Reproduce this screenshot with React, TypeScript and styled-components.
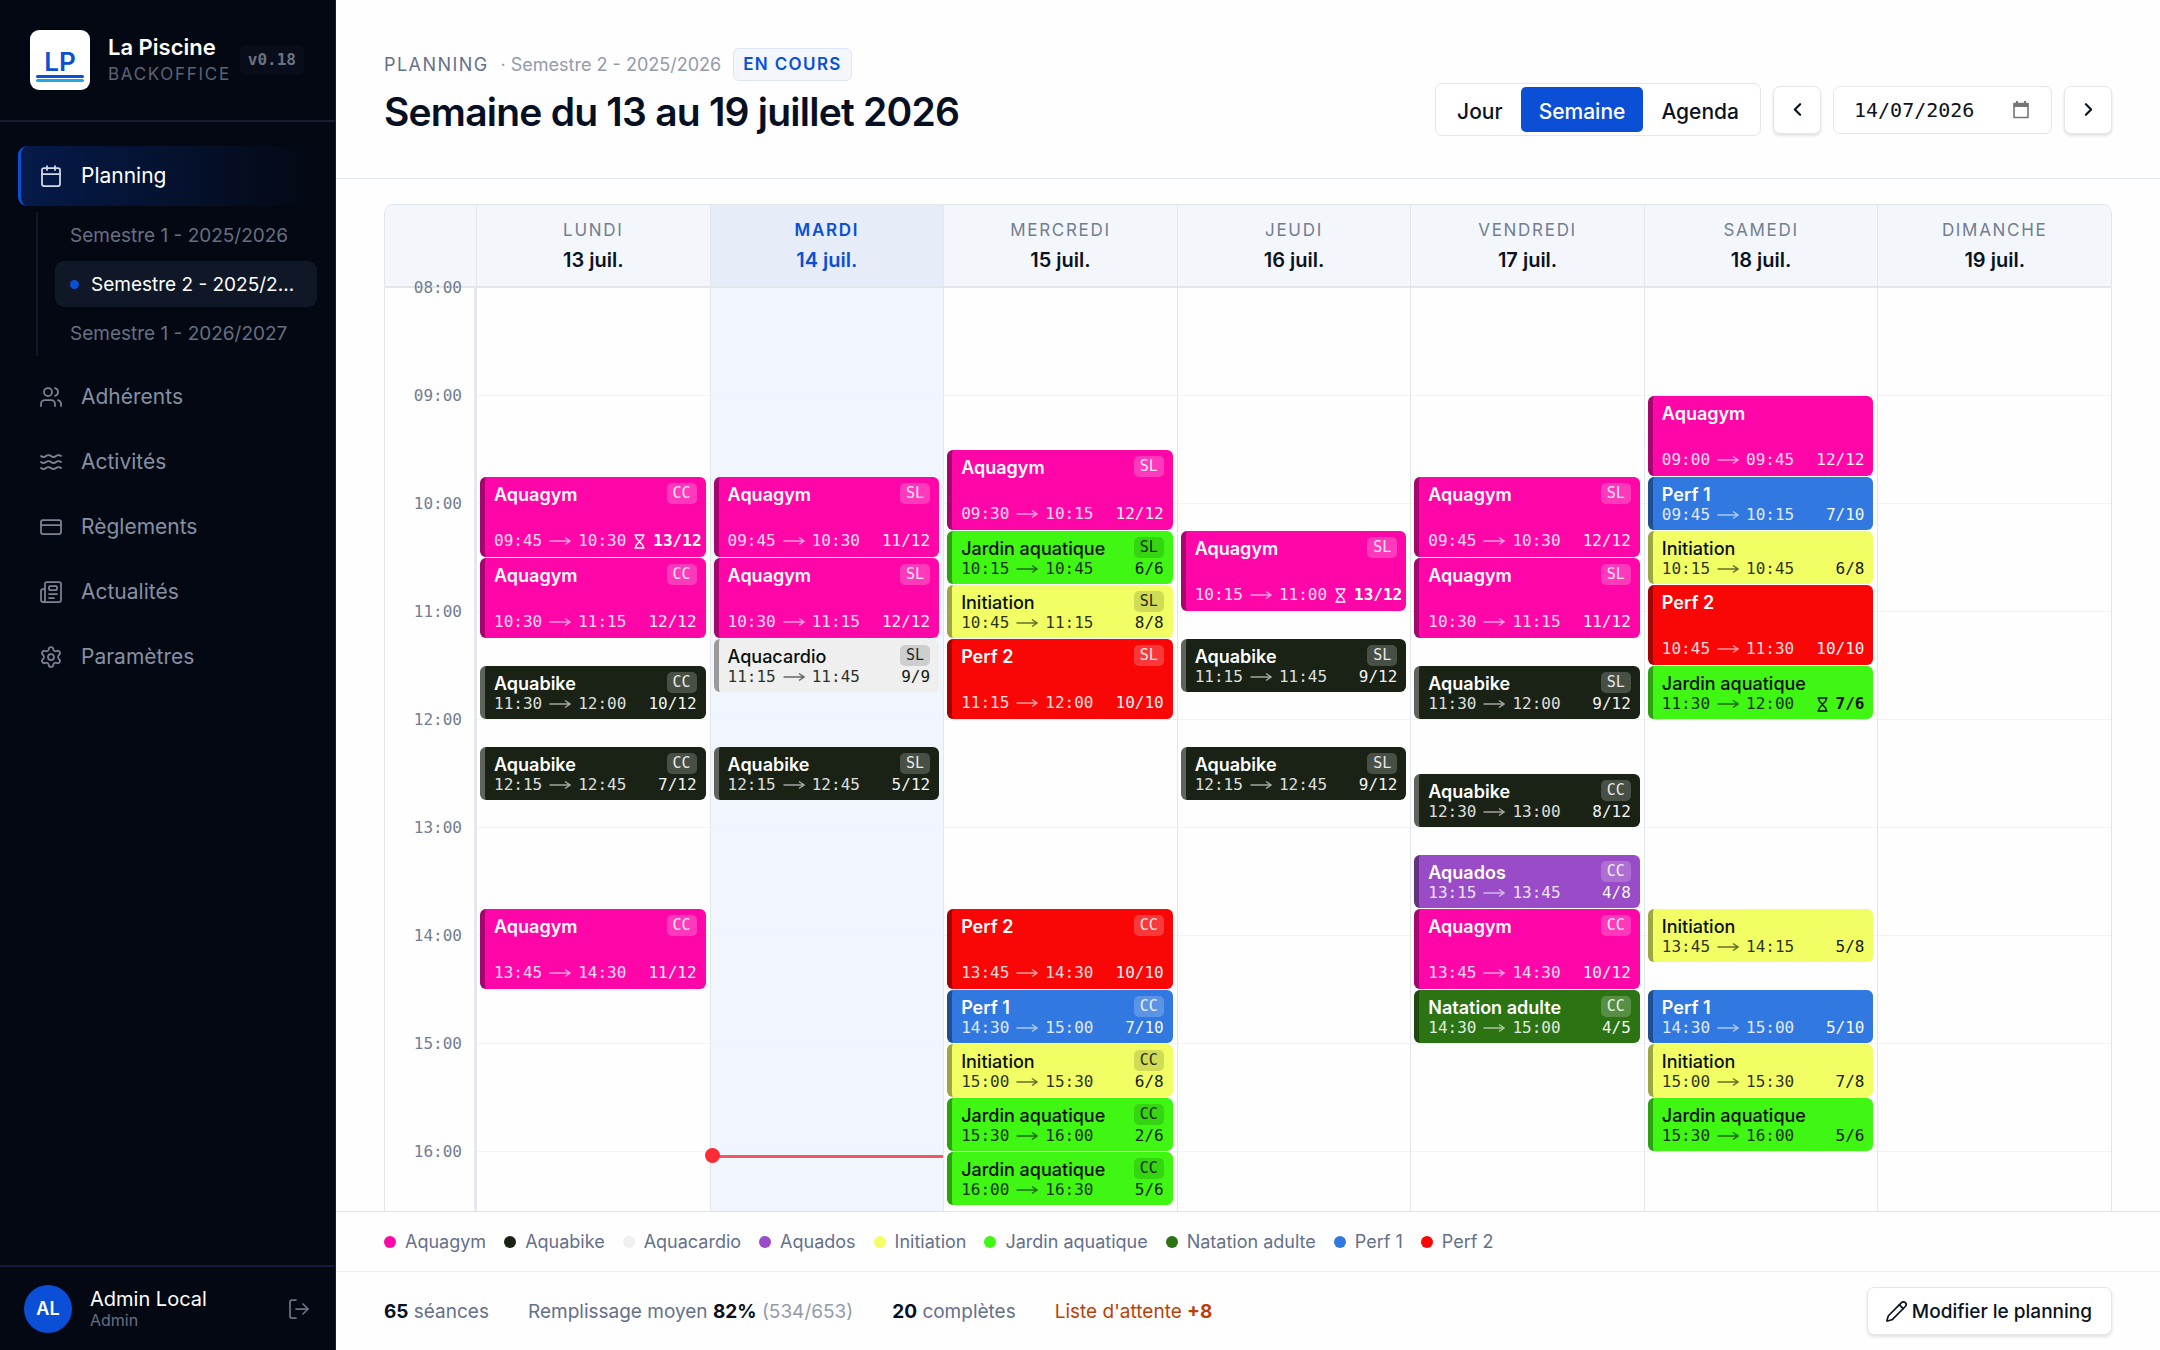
import React from "react";
import styled, { createGlobalStyle, css } from "styled-components";
import {
  Calendar, Users, Waves, CreditCard, Newspaper, Settings, LogOut,
  ChevronLeft, ChevronRight, Pencil,
} from "lucide-react";

const sans = `Inter, "Liberation Sans", sans-serif`;
const mono = `"DejaVu Sans Mono", "Liberation Mono", monospace`;
const HOUR = 108;
const FIRST_HOUR = 8;
const LAST_HOUR = 17;

const Global = createGlobalStyle`
  *, *::before, *::after { box-sizing: border-box; }
  body { margin: 0; font-family: ${sans}; color: #0b1220; background: #fefefe; }
  button, input { font: inherit; color: inherit; margin: 0; }
  h1, h2, p, ul { margin: 0; padding: 0; }
  ul { list-style: none; }
  a { color: inherit; text-decoration: none; }
`;

const Shell = styled.div`
  display: grid;
  grid-template-columns: 336px minmax(0, 1fr);
  height: 100vh;
  overflow: hidden;
`;

/* ---------- sidebar ---------- */
const Sidebar = styled.aside`
  display: flex;
  flex-direction: column;
  background: #040813;
  border-right: 1px solid #1a1b3a;
  color: #fff;
`;
const Brand = styled.div`
  display: flex;
  align-items: center;
  gap: 18px;
  padding: 30px;
  border-bottom: 2px solid #171a35;
`;
const BrandName = styled.div`
  font-size: 22px;
  line-height: 28px;
  font-weight: 600;
`;
const BrandSub = styled.div`
  font-size: 17px;
  line-height: 26px;
  letter-spacing: 0.1em;
  color: #5b6474;
`;
const BrandText = styled.div`
  flex: none;
`;
const Version = styled.span`
  margin-left: -9px;
  padding: 0 8px;
  border-radius: 6px;
  background: #080d19;
  font: 600 16px/30px ${mono};
  color: #6a7282;
`;
const Nav = styled.nav`
  flex: 1;
  padding: 24px 18px;
`;
const NavList = styled.ul`
  display: flex;
  flex-direction: column;
  gap: 5px;
`;
const NavLink = styled.a<{ $active?: boolean }>`
  display: flex;
  align-items: center;
  gap: 18px;
  height: 60px;
  padding-left: 18px;
  border-left: 3px solid transparent;
  border-radius: 9px;
  font-size: 21px;
  line-height: 30px;
  font-weight: 400;
  color: #8490a3;
  svg { color: #7b8495; }
  ${(p) => p.$active && css`
    color: #fff;
    border-left-color: #0b4fd6;
    background: linear-gradient(90deg, #051a4a, #040813);
    svg { color: #d3dbe8; }
  `}
`;
const SubList = styled.ul`
  display: flex;
  flex-direction: column;
  gap: 3px;
  margin: 6px 0 6px 18px;
  padding-left: 17px;
  border-left: 2px solid #14172c;
`;
const SubLink = styled.a<{ $active?: boolean }>`
  display: flex;
  align-items: center;
  gap: 12px;
  height: 46px;
  padding: 0 15px;
  border-radius: 9px;
  font-size: 19px;
  color: #667082;
  span { overflow: hidden; text-overflow: ellipsis; white-space: nowrap; }
  ${(p) => p.$active && css`
    color: #fff;
    background: #101828;
    &::before {
      content: "";
      flex: none;
      width: 9px;
      height: 9px;
      border-radius: 50%;
      background: #0b4fd6;
    }
  `}
`;
const Account = styled.div`
  display: flex;
  align-items: center;
  gap: 18px;
  height: 85px;
  padding: 0 24px;
  border-top: 2px solid #171a35;
`;
const Avatar = styled.span`
  width: 48px;
  height: 48px;
  border-radius: 50%;
  background: #0b4fd6;
  font-size: 18px;
  line-height: 48px;
  font-weight: 600;
  text-align: center;
`;
const AccountText = styled.div`
  flex: 1;
`;
const AccountName = styled.div`
  font-size: 20px;
  line-height: 22px;
  font-weight: 400;
`;
const AccountRole = styled.div`
  font-size: 16px;
  line-height: 20px;
  color: #667082;
`;
const GhostButton = styled.button`
  display: flex;
  padding: 0;
  border: 0;
  background: none;
  color: #6a7282;
`;

/* ---------- main header ---------- */
const Main = styled.main`
  display: flex;
  flex-direction: column;
  min-width: 0;
  min-height: 0;
`;
const Header = styled.header`
  flex: none;
  display: flex;
  justify-content: space-between;
  align-items: flex-end;
  padding: 48px 48px 42px;
  border-bottom: 1px solid #e2e7ec;
`;
const Eyebrow = styled.p`
  display: flex;
  align-items: center;
  gap: 12px;
  height: 33px;
  font-size: 18px;
  color: #939bab;
`;
const EyebrowStrong = styled.span`
  letter-spacing: 0.08em;
  color: #64708a;
`;
const Status = styled.span`
  padding: 0 9px;
  border: 1px solid #dbe5f3;
  border-radius: 6px;
  background: #f3f7fb;
  font-size: 17px;
  line-height: 31px;
  font-weight: 600;
  letter-spacing: 0.08em;
  color: #0b4fd6;
`;
const Title = styled.h1`
  margin-top: 6px;
  font-size: 39px;
  line-height: 49px;
  font-weight: 600;
  letter-spacing: -0.02em;
  color: #071022;
`;
const Controls = styled.div`
  display: flex;
  align-items: center;
  gap: 12px;
`;
const Segmented = styled.div`
  display: flex;
  padding: 3px;
  border: 1px solid #e2e7ec;
  border-radius: 7px;
  background: #fff;
`;
const Segment = styled.button<{ $active?: boolean }>`
  height: 45px;
  padding: 3px 18px 0;
  border: 0;
  border-radius: 5px;
  background: ${(p) => (p.$active ? "#0b4fd6" : "transparent")};
  color: ${(p) => (p.$active ? "#fff" : "#0b1220")};
  font-size: 21px;
  font-weight: 500;
`;
const raised = css`
  border: 1px solid #e2e7ec;
  border-radius: 7px;
  background: #fff;
  box-shadow: 0 2px 3px rgba(15, 23, 42, 0.12);
`;
const Step = styled.button`
  ${raised}
  display: flex;
  align-items: center;
  justify-content: center;
  width: 48px;
  height: 48px;
  padding: 0;
`;
const DateField = styled.label`
  display: flex;
  align-items: center;
  width: 219px;
  height: 48px;
  padding: 0 20px;
  border: 1px solid #e2e7ec;
  border-radius: 7px;
  background: #fff;
  color: #767676;
`;
const DateInput = styled.input`
  flex: 1;
  min-width: 0;
  padding: 0;
  border: 0;
  outline: 0;
  background: none;
  font: 400 20px/24px ${mono};
  color: #0b1220;
`;

/* ---------- calendar ---------- */
const columns = css`
  display: grid;
  grid-template-columns: 91px repeat(7, minmax(0, 1fr));
`;
const Viewport = styled.div`
  flex: 1;
  min-height: 0;
  padding: 25px 48px 0;
  overflow: hidden;
`;
const Board = styled.section`
  border: 1px solid #e2e7ec;
  border-radius: 9px;
  overflow: hidden;
`;
const DayHeads = styled.div`
  ${columns}
  height: 83px;
  background: #f3f7fb;
  border-bottom: 2px solid #e2e7ec;
`;
const DayHead = styled.div<{ $today?: boolean }>`
  padding-top: 11px;
  border-left: 1px solid #e2e7ec;
  text-align: center;
  background: ${(p) => (p.$today ? "#e6ecf8" : "transparent")};
  color: ${(p) => (p.$today ? "#0b4fd6" : "#0b1220")};
`;
const DayName = styled.div<{ $today?: boolean }>`
  font-size: 17px;
  line-height: 28px;
  letter-spacing: 0.1em;
  font-weight: ${(p) => (p.$today ? 600 : 400)};
  color: ${(p) => (p.$today ? "#0b4fd6" : "#737d92")};
`;
const DayDate = styled.div`
  font-size: 20px;
  line-height: 32px;
  font-weight: 600;
`;
const Grid = styled.div`
  ${columns}
`;
const Hours = styled.div`
  border-right: 2px solid #e6e9f0;
`;
const HourCell = styled.div`
  height: ${HOUR}px;
  padding-right: 12px;
  text-align: right;
`;
const HourText = styled.span`
  position: relative;
  top: -12px;
  display: block;
  font: 400 16px/24px ${mono};
  color: #737d92;
`;
const Day = styled.div<{ $today?: boolean }>`
  position: relative;
  border-left: 1px solid #e2e7ec;
  background:
    repeating-linear-gradient(to bottom, transparent 0 ${HOUR - 1}px, #f0f3f7 ${HOUR - 1}px ${HOUR}px)
    ${(p) => (p.$today ? "#f1f5fe" : "#fefefe")};
`;
const Session = styled.button<{ $bg: string; $edge: string; $dark: boolean; $start: number; $length: number }>`
  position: absolute;
  left: 3px;
  right: 4px;
  top: ${(p) => (p.$start * HOUR) / 60}px;
  height: ${(p) => (p.$length * HOUR) / 60 - 1}px;
  display: flex;
  flex-direction: column;
  justify-content: space-between;
  padding: 6px 9px;
  border: 0;
  border-left: 5px solid ${(p) => p.$edge};
  border-radius: 6px;
  background: ${(p) => p.$bg};
  color: ${(p) => (p.$dark ? "#0a0f0a" : "#fff")};
  text-align: left;
`;
const SessionTop = styled.span`
  flex: none;
  display: flex;
  justify-content: space-between;
  align-items: flex-start;
  width: 100%;
  height: 22px;
  font-size: 18px;
  line-height: 24px;
`;
const SessionName = styled.span<{ $dark: boolean }>`
  font-weight: ${(p) => (p.$dark ? 500 : 600)};
  white-space: nowrap;
`;
const Teacher = styled.span<{ $dark: boolean }>`
  padding: 0 6px;
  border-radius: 5px;
  background: ${(p) => (p.$dark ? "rgba(0,0,0,.15)" : "rgba(255,255,255,.23)")};
  font: 400 15px/21px ${mono};
  opacity: 0.9;
`;
const SessionBottom = styled.span`
  flex: none;
  display: flex;
  justify-content: space-between;
  width: 100%;
  gap: 8px;
  font: 400 16px/20px ${mono};
  white-space: nowrap;
`;
const Times = styled.span`
  display: flex;
  opacity: 0.85;
`;
const Arrow = styled.span`
  display: flex;
  align-items: center;
  justify-content: center;
  width: 36px;
  opacity: 0.7;
`;
const Count = styled.span<{ $over: boolean }>`
  display: flex;
  align-items: center;
  gap: 8px;
  opacity: ${(p) => (p.$over ? 1 : 0.95)};
  font-weight: ${(p) => (p.$over ? 700 : 400)};
`;
const NowLine = styled.div`
  position: absolute;
  left: 0;
  right: 0;
  top: ${8 * HOUR + 3}px;
  height: 3px;
  background: #ee5a60;
  &::before {
    content: "";
    position: absolute;
    left: -6px;
    top: -7px;
    width: 15px;
    height: 15px;
    border-radius: 50%;
    background: #fb2c36;
  }
`;

/* ---------- footer ---------- */
const Legend = styled.ul`
  flex: none;
  display: flex;
  align-items: center;
  gap: 18px;
  height: 60px;
  padding: 0 48px;
  border-top: 1px solid #dfe4e9;
  font-size: 18px;
  color: #64708a;
`;
const LegendItem = styled.li<{ $color: string }>`
  display: flex;
  align-items: center;
  gap: 9px;
  &::before {
    content: "";
    width: 12px;
    height: 12px;
    border-radius: 50%;
    background: ${(p) => p.$color};
  }
`;
const Summary = styled.footer`
  flex: none;
  display: flex;
  align-items: center;
  gap: 39px;
  height: 79px;
  padding: 0 48px;
  border-top: 1px solid #eef1f4;
  font-size: 19px;
  color: #64708a;
  strong { font-weight: 700; color: #071022; }
  small { font-size: inherit; color: #939bab; }
`;
const Waiting = styled.span`
  color: #bb3f06;
  strong { color: inherit; }
`;
const EditButton = styled.button`
  ${raised}
  display: flex;
  align-items: center;
  gap: 4px;
  height: 48px;
  margin-left: auto;
  padding: 0 19px 0 17px;
  font-size: 19px;
  font-weight: 500;
  color: #0b1220;
`;

type Activity = { bg: string; edge: string; dark: boolean };
const activities: Record<string, Activity> = {
  Aquagym: { bg: "#ff06a9", edge: "#a6046e", dark: false },
  Aquabike: { bg: "#192215", edge: "#5e645b", dark: false },
  Aquacardio: { bg: "#efefef", edge: "#9b9b9b", dark: true },
  Aquados: { bg: "#994bc8", edge: "#633182", dark: false },
  Initiation: { bg: "#f2ff64", edge: "#9da641", dark: true },
  "Jardin aquatique": { bg: "#40f714", edge: "#2aa10d", dark: true },
  "Natation adulte": { bg: "#2c7314", edge: "#1d4b0d", dark: false },
  "Perf 1": { bg: "#3178e0", edge: "#204e92", dark: false },
  "Perf 2": { bg: "#f90606", edge: "#a20404", dark: false },
};

type Row = [name: string, start: string, end: string, count: string, teacher?: string];
const week: { name: string; date: string; today?: boolean; rows: Row[] }[] = [
  { name: "LUNDI", date: "13 juil.", rows: [
    ["Aquagym", "09:45", "10:30", "13/12", "CC"],
    ["Aquagym", "10:30", "11:15", "12/12", "CC"],
    ["Aquabike", "11:30", "12:00", "10/12", "CC"],
    ["Aquabike", "12:15", "12:45", "7/12", "CC"],
    ["Aquagym", "13:45", "14:30", "11/12", "CC"],
  ] },
  { name: "MARDI", date: "14 juil.", today: true, rows: [
    ["Aquagym", "09:45", "10:30", "11/12", "SL"],
    ["Aquagym", "10:30", "11:15", "12/12", "SL"],
    ["Aquacardio", "11:15", "11:45", "9/9", "SL"],
    ["Aquabike", "12:15", "12:45", "5/12", "SL"],
  ] },
  { name: "MERCREDI", date: "15 juil.", rows: [
    ["Aquagym", "09:30", "10:15", "12/12", "SL"],
    ["Jardin aquatique", "10:15", "10:45", "6/6", "SL"],
    ["Initiation", "10:45", "11:15", "8/8", "SL"],
    ["Perf 2", "11:15", "12:00", "10/10", "SL"],
    ["Perf 2", "13:45", "14:30", "10/10", "CC"],
    ["Perf 1", "14:30", "15:00", "7/10", "CC"],
    ["Initiation", "15:00", "15:30", "6/8", "CC"],
    ["Jardin aquatique", "15:30", "16:00", "2/6", "CC"],
    ["Jardin aquatique", "16:00", "16:30", "5/6", "CC"],
  ] },
  { name: "JEUDI", date: "16 juil.", rows: [
    ["Aquagym", "10:15", "11:00", "13/12", "SL"],
    ["Aquabike", "11:15", "11:45", "9/12", "SL"],
    ["Aquabike", "12:15", "12:45", "9/12", "SL"],
  ] },
  { name: "VENDREDI", date: "17 juil.", rows: [
    ["Aquagym", "09:45", "10:30", "12/12", "SL"],
    ["Aquagym", "10:30", "11:15", "11/12", "SL"],
    ["Aquabike", "11:30", "12:00", "9/12", "SL"],
    ["Aquabike", "12:30", "13:00", "8/12", "CC"],
    ["Aquados", "13:15", "13:45", "4/8", "CC"],
    ["Aquagym", "13:45", "14:30", "10/12", "CC"],
    ["Natation adulte", "14:30", "15:00", "4/5", "CC"],
  ] },
  { name: "SAMEDI", date: "18 juil.", rows: [
    ["Aquagym", "09:00", "09:45", "12/12"],
    ["Perf 1", "09:45", "10:15", "7/10"],
    ["Initiation", "10:15", "10:45", "6/8"],
    ["Perf 2", "10:45", "11:30", "10/10"],
    ["Jardin aquatique", "11:30", "12:00", "7/6"],
    ["Initiation", "13:45", "14:15", "5/8"],
    ["Perf 1", "14:30", "15:00", "5/10"],
    ["Initiation", "15:00", "15:30", "7/8"],
    ["Jardin aquatique", "15:30", "16:00", "5/6"],
  ] },
  { name: "DIMANCHE", date: "19 juil.", rows: [] },
];

const minutes = (t: string) => {
  const [h, m] = t.split(":").map(Number);
  return (h - FIRST_HOUR) * 60 + m;
};

function SessionCard({ row }: { row: Row }) {
  const [name, start, end, count, teacher] = row;
  const { bg, edge, dark } = activities[name];
  const [taken, places] = count.split("/").map(Number);
  const over = taken > places;
  return (
    <Session type="button" $bg={bg} $edge={edge} $dark={dark} $start={minutes(start)} $length={minutes(end) - minutes(start)}>
      <SessionTop>
        <SessionName $dark={dark}>{name}</SessionName>
        {teacher && <Teacher $dark={dark}>{teacher}</Teacher>}
      </SessionTop>
      <SessionBottom>
        <Times>
          {start}
          <Arrow>
            <svg width="22" height="10" viewBox="0 0 22 10" fill="none" stroke="currentColor" strokeWidth="1.5" aria-label="à">
              <path d="M0.5 5H21M16 1.5 21 5 16 8.5" />
            </svg>
          </Arrow>
          {end}
        </Times>
        <Count $over={over}>
          {over && (
            <svg width="11" height="15" viewBox="0 0 11 15" fill="none" stroke="currentColor" strokeWidth="1.4" aria-hidden="true">
              <path d="M0.5 1H10.5M0.5 14H10.5M2 1V3C2 5 5.5 6.5 5.5 7.5C5.5 8.5 2 10 2 12V14M9 1V3C9 5 5.5 6.5 5.5 7.5C5.5 8.5 9 10 9 12V14" />
            </svg>
          )}
          {count}
        </Count>
      </SessionBottom>
    </Session>
  );
}

function Logo() {
  return (
    <svg width="60" height="60" viewBox="0 0 60 60" role="img" aria-label="LP">
      <rect width="60" height="60" rx="9" fill="#fff" />
      <text x="30" y="41" textAnchor="middle" fontFamily="Inter, sans-serif" fontSize="26" fontWeight="600" fill="#0b4fd6">LP</text>
      <rect x="6" y="45" width="48" height="3" rx="1.5" fill="#0b4fd6" />
      <rect x="6" y="49" width="48" height="3" rx="1.5" fill="#27a5e0" />
    </svg>
  );
}

const links = [
  { label: "Adhérents", Icon: Users },
  { label: "Activités", Icon: Waves },
  { label: "Règlements", Icon: CreditCard },
  { label: "Actualités", Icon: Newspaper },
  { label: "Paramètres", Icon: Settings },
];

export default function App() {
  const hours = Array.from({ length: LAST_HOUR - FIRST_HOUR }, (_, i) => FIRST_HOUR + i);
  return (
    <>
      <Global />
      <Shell>
        <Sidebar>
          <Brand>
            <Logo />
            <BrandText>
              <BrandName>La Piscine</BrandName>
              <BrandSub>BACKOFFICE</BrandSub>
            </BrandText>
            <Version>v0.18</Version>
          </Brand>
          <Nav aria-label="Navigation principale">
            <NavList>
              <li>
                <NavLink href="#planning" $active aria-current="page">
                  <Calendar size={24} strokeWidth={1.75} />
                  Planning
                </NavLink>
                <SubList>
                  <li><SubLink href="#s1-2025"><span>Semestre 1 - 2025/2026</span></SubLink></li>
                  <li><SubLink href="#s2-2025" $active><span>Semestre 2 - 2025/2026</span></SubLink></li>
                  <li><SubLink href="#s1-2026"><span>Semestre 1 - 2026/2027</span></SubLink></li>
                </SubList>
              </li>
              {links.map(({ label, Icon }) => (
                <li key={label}>
                  <NavLink href={`#${label}`}>
                    <Icon size={24} strokeWidth={1.75} />
                    {label}
                  </NavLink>
                </li>
              ))}
            </NavList>
          </Nav>
          <Account>
            <Avatar>AL</Avatar>
            <AccountText>
              <AccountName>Admin Local</AccountName>
              <AccountRole>Admin</AccountRole>
            </AccountText>
            <GhostButton type="button" aria-label="Se déconnecter">
              <LogOut size={24} strokeWidth={1.75} />
            </GhostButton>
          </Account>
        </Sidebar>
        <Main>
          <Header>
            <div>
              <Eyebrow>
                <EyebrowStrong>PLANNING</EyebrowStrong>
                <span>· Semestre 2 - 2025/2026</span>
                <Status>EN COURS</Status>
              </Eyebrow>
              <Title>Semaine du 13 au 19 juillet 2026</Title>
            </div>
            <Controls>
              <Segmented role="group" aria-label="Vue">
                <Segment type="button">Jour</Segment>
                <Segment type="button" $active aria-pressed="true">Semaine</Segment>
                <Segment type="button">Agenda</Segment>
              </Segmented>
              <Step type="button" aria-label="Semaine précédente"><ChevronLeft size={21} strokeWidth={2.5} /></Step>
              <DateField>
                <DateInput type="text" aria-label="Date" defaultValue="14/07/2026" />
                <svg width="20" height="20" viewBox="0 0 20 20" fill="none" aria-hidden="true">
                  <path d="M3 3.5H17V17.5H3Z" stroke="currentColor" strokeWidth="1.6" strokeLinejoin="round" />
                  <path d="M2.5 3H17.5V7H2.5ZM5 1H7V4H5ZM13 1H15V4H13Z" fill="currentColor" />
                </svg>
              </DateField>
              <Step type="button" aria-label="Semaine suivante"><ChevronRight size={21} strokeWidth={2.5} /></Step>
            </Controls>
          </Header>
          <Viewport>
            <Board>
              <DayHeads>
                <div />
                {week.map((d) => (
                  <DayHead key={d.name} $today={d.today}>
                    <DayName $today={d.today}>{d.name}</DayName>
                    <DayDate>{d.date}</DayDate>
                  </DayHead>
                ))}
              </DayHeads>
              <Grid>
                <Hours>
                  {hours.map((h) => (
                    <HourCell key={h}><HourText>{String(h).padStart(2, "0")}:00</HourText></HourCell>
                  ))}
                </Hours>
                {week.map((d) => (
                  <Day key={d.name} $today={d.today}>
                    {d.rows.map((row) => <SessionCard key={row[1]} row={row} />)}
                    {d.today && <NowLine />}
                  </Day>
                ))}
              </Grid>
            </Board>
          </Viewport>
          <Legend>
            {Object.entries(activities).map(([name, a]) => (
              <LegendItem key={name} $color={a.bg}>{name}</LegendItem>
            ))}
          </Legend>
          <Summary>
            <span><strong>65</strong> séances</span>
            <span>Remplissage moyen <strong>82%</strong> <small>(534/653)</small></span>
            <span><strong>20</strong> complètes</span>
            <Waiting>Liste d'attente <strong>+8</strong></Waiting>
            <EditButton type="button"><Pencil size={23} strokeWidth={1.75} />Modifier le planning</EditButton>
          </Summary>
        </Main>
      </Shell>
    </>
  );
}
